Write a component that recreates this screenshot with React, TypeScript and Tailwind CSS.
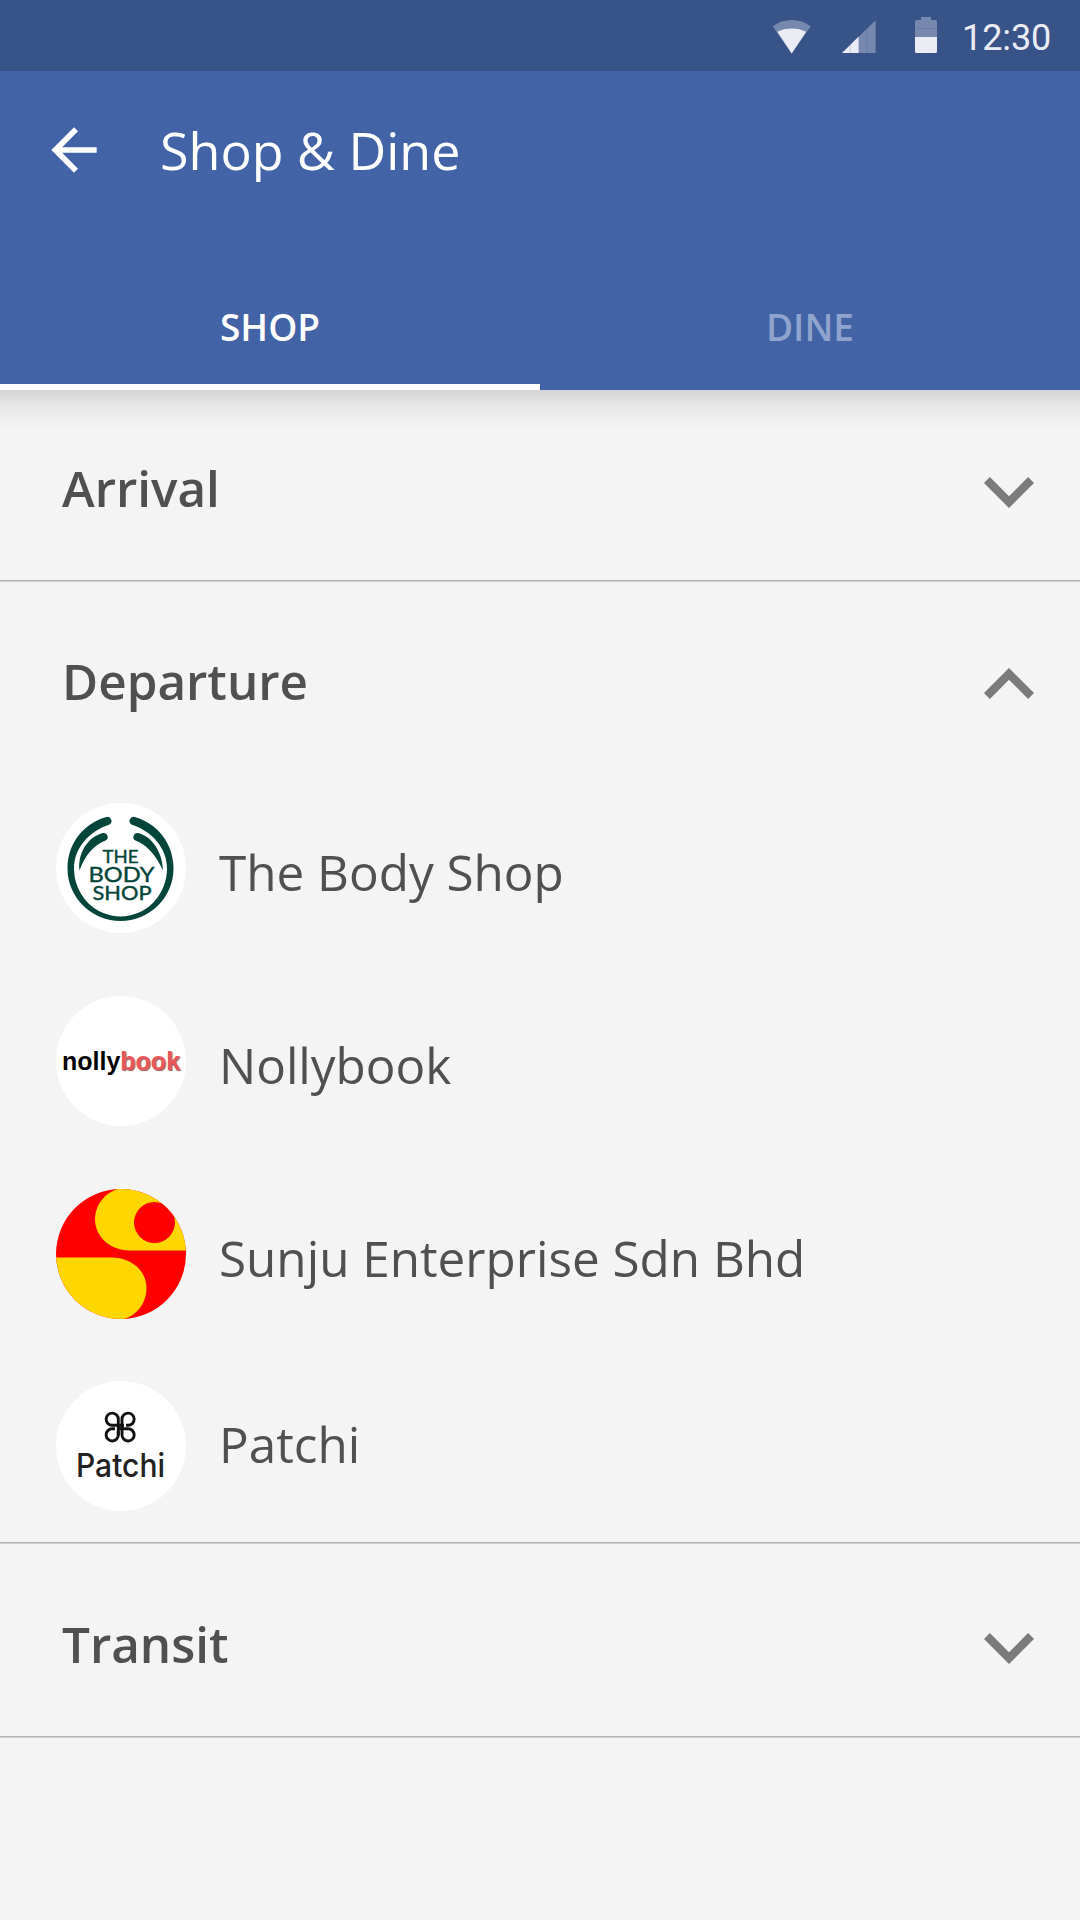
import { useState, type ReactNode } from "react";

const arrowPath = "M20 11H7.83l5.59-5.59L12 4l-8 8 8 8 1.41-1.41L7.83 13H20v-2z";
const chevronPath = "M16.59 8.59 12 13.17 7.41 8.59 6 10l6 6 6-6z";

function StatusBar() {
  return (
    <div className="flex h-[71px] justify-end bg-[#385387] text-[#ebecf3]">
      <svg className="mt-4 h-10 w-[170px]" viewBox="770 16 170 40" fill="currentColor">
        <path opacity=".35" d="M791.7 53.4 772.7 26.2Q781.5 20 791.7 20T810.7 26.2Z" />
        <path d="M791.7 53.4 777.3 31.8Q783.5 28.4 791.7 28.4T806.1 31.8Z" />
        <path opacity=".35" d="M842 53 875.6 20.2V53Z" />
        <path d="M842 53 858.6 36.8V53Z" />
        <path opacity=".35" d="M915 21.5q0-1.500 1.500-1.500H921v-3h10v3h4.500q1.500 0 1.500 1.500V37h-22Z" />
        <path d="M915 37h22v14.500q0 1.500-1.500 1.500h-19q-1.500 0-1.500-1.500Z" />
        <path d="M850.3 45v8M867 29v24M915 28.500h22" stroke="#385387" strokeWidth=".7" opacity=".3" />
      </svg>
      <span className="ml-[22px] mr-7 w-[90px] whitespace-nowrap font-['Roboto',sans-serif] text-[36px] leading-[76px] tracking-[-0.1px]">
        12:30
      </span>
    </div>
  );
}

function Tab({ label, active, onClick }: { label: string; active: boolean; onClick: () => void }) {
  return (
    <button
      onClick={onClick}
      className={`flex h-[161px] w-1/2 items-center justify-center border-b-[6px] pt-10 text-[37px] leading-none font-semibold ${
        active ? "border-white text-white" : "border-transparent text-[#8fa3cc]"
      }`}
    >
      {label}
    </button>
  );
}

type SectionProps = {
  title: string;
  open: boolean;
  onToggle: () => void;
  rowClass: string;
  children?: ReactNode;
};

function Section({ title, open, onToggle, rowClass, children }: SectionProps) {
  return (
    <section className="border-b border-[#cfcfcf]">
      <div className="border-b border-[#b4b4b4]">
        <button onClick={onToggle} className={`flex w-full items-center justify-between pr-[46px] pl-[62px] ${rowClass}`}>
          <span className="text-[49.4px] leading-[50px] font-semibold">{title}</span>
          <svg
            className={`h-[31px] w-[50px] text-[#7b7b7b] ${open ? "mt-[4px] rotate-180" : "mt-[9px]"}`}
            viewBox="6 8.59 12 7.41"
            fill="currentColor"
          >
            <path d={chevronPath} />
          </svg>
        </button>
        {open && children}
      </div>
    </section>
  );
}

function BodyShopLogo() {
  return (
    <svg className="size-full" viewBox="0 0 130 130">
      <g fill="#04453a">
        <path d="M50.500 14C27.500 20.500 11.500 40.500 11.500 65.500a53 52.500 0 0 0 106 0C117.500 40.500 101.500 20.500 78.500 14a4.100 4.100 0 0 0-3 7.500C96.500 28.500 111 45.500 111 65.500a46.500 48 0 0 1-93 0C18 45.500 32.500 28.500 53.500 21.500a4.100 4.100 0 0 0-3-7.500Z" />
        <path d="M47 30C32.500 33.500 21.500 49.500 23.500 67.500 29.500 51.500 37.500 42.500 49.500 37.500a4 4 0 0 0-2.500-7.500ZM82 30C96.500 33.500 106.500 49.500 107 67.500 99.500 51.500 91.500 42.500 79.500 37.500a4 4 0 0 1 2.500-7.500Z" />
      </g>
      <g fill="#04453a" stroke="#04453a" strokeWidth=".4" fontFamily="Lato" fontWeight="400" textAnchor="middle">
        <text x="64.500" y="59.500" fontSize="17" textLength="36" lengthAdjust="spacingAndGlyphs">THE</text>
        <text x="65.500" y="78.500" fontSize="21" textLength="66" lengthAdjust="spacingAndGlyphs">BODY</text>
        <text x="66" y="97" fontSize="19" textLength="59" lengthAdjust="spacingAndGlyphs">SHOP</text>
      </g>
    </svg>
  );
}

function NollybookLogo() {
  return (
    <div className="flex size-full items-center justify-center whitespace-nowrap font-['Liberation_Sans',sans-serif] text-[25px] leading-none font-bold">
      <span className="text-black">nolly</span>
      <span className="text-[#e8575a] [text-shadow:1px_1px_1px_#8a5a5a]">book</span>
    </div>
  );
}

function SunjuLogo() {
  return (
    <svg className="size-full" viewBox="0 0 130 130">
      <rect width="130" height="130" fill="#fe0000" />
      <g fill="#fed700">
        <path d="M62 0C48 4 39 17 39 30c0 17 14 31 34 31.500h57V0Z" />
        <path d="M0 68.500h57c20 1 33.500 14 33.500 31 0 13-8 26-22.500 30.500H0Z" />
      </g>
      <circle cx="98.500" cy="33.500" r="20.500" fill="#fe0000" />
    </svg>
  );
}

function PatchiLogo() {
  return (
    <svg className="size-full" viewBox="0 0 130 130">
      <g fill="none" stroke="#111" strokeWidth="2.900">
        <path d="M62.300 54.500V38.500a6.100 6.100 0 1 0-6.100 5.800H68" />
        <path d="M70 44.300h2.100a6.100 6.100 0 1 0-6.100-5.800V49" />
        <path d="M59 47.800h-2.800a6.100 6.100 0 1 0 6.100 5.800V50" />
        <path d="M61 47.800h11.100a6.100 6.100 0 1 1-6.100 5.800V44" />
      </g>
      <text x="64.500" y="95.500" fontFamily="Inter" fontSize="32" fontWeight="500" fill="#222" textAnchor="middle" textLength="89" lengthAdjust="spacingAndGlyphs">
        Patchi
      </text>
    </svg>
  );
}

const shops = [
  { name: "The Body Shop", logo: <BodyShopLogo />, shift: "pt-[8px]" },
  { name: "Nollybook", logo: <NollybookLogo />, shift: "pt-[8px]" },
  { name: "Sunju Enterprise Sdn Bhd", logo: <SunjuLogo />, shift: "pt-[8px]" },
  { name: "Patchi", logo: <PatchiLogo />, shift: "pb-[5px]" },
];

export default function App() {
  const [tab, setTab] = useState("SHOP");
  const [open, setOpen] = useState("Departure");
  const toggle = (name: string) => setOpen(open === name ? "" : name);

  return (
    <div className="min-h-[1920px] w-[1080px] bg-[#f4f4f4] font-['Open_Sans',sans-serif] text-[#505050]">
      <StatusBar />
      <header className="bg-[#4263a5] text-white">
        <div className="flex h-[158px] items-center">
          <svg className="ml-[40px] size-[68px]" viewBox="0 0 24 24" fill="currentColor">
            <path d={arrowPath} />
          </svg>
          <h1 className="ml-[52px] text-[52px] leading-none">Shop &amp; Dine</h1>
        </div>
        <nav className="flex">
          {["SHOP", "DINE"].map((t) => (
            <Tab key={t} label={t} active={tab === t} onClick={() => setTab(t)} />
          ))}
        </nav>
      </header>
      <main>
        <div className="-mb-10 h-10 bg-linear-to-b from-[#d4d3d3] via-[#e8e8e8] via-40% to-[#f4f4f4]" />
        <Section title="Arrival" open={open === "Arrival"} onToggle={() => toggle("Arrival")} rowClass="h-[190px] pt-[6px]" />
        <Section title="Departure" open={open === "Departure"} onToggle={() => toggle("Departure")} rowClass="h-[190px] pt-[8px]">
          <ul>
            {shops.map((s) => (
              <li key={s.name} className="flex h-[193px] items-center pb-px pl-[56px] last:h-[191px]">
                <div className="size-[130px] shrink-0 overflow-hidden rounded-full bg-white">{s.logo}</div>
                <span className={`ml-[33px] text-[49.4px] leading-[50px] ${s.shift}`}>{s.name}</span>
              </li>
            ))}
          </ul>
        </Section>
        <Section title="Transit" open={open === "Transit"} onToggle={() => toggle("Transit")} rowClass="h-[192px] pt-[8px]" />
      </main>
    </div>
  );
}
